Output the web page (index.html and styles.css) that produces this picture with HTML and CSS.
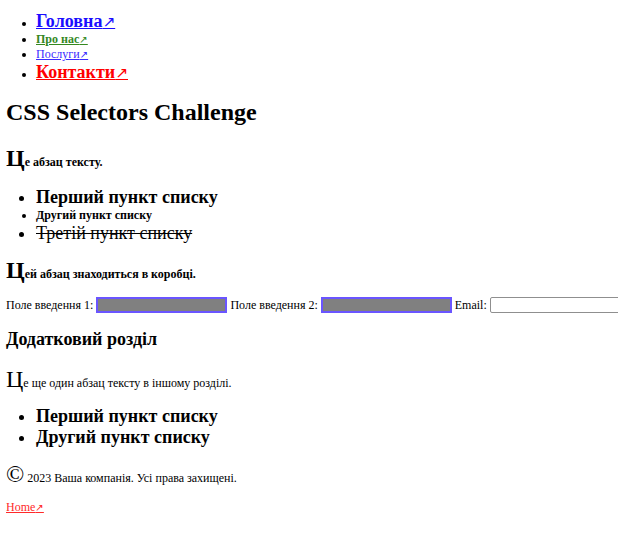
FILE: index.html
```html
<!DOCTYPE html>
<html lang="uk">
<head>
<meta charset="utf-8">
<title>CSS Selectors Challenge</title>
<link rel="stylesheet" href="styles.css">
</head>
<body>
<header>
  <nav>
    <ul class="nav">
      <li class="nav-item"><a class="nav-link home" href="#">Головна</a></li>
      <li class="nav-item"><a class="nav-link about" href="#">Про нас</a></li>
      <li class="nav-item"><a class="nav-link services" href="#">Послуги</a></li>
      <li class="nav-item"><a class="nav-link contacts" href="#">Контакти</a></li>
    </ul>
  </nav>
</header>
<main>
  <h1 class="title">CSS Selectors Challenge</h1>
  <p class="para bold">Це абзац тексту.</p>
  <ul class="list list-main">
    <li class="item-big">Перший пункт списку</li>
    <li class="item-small">Другий пункт списку</li>
    <li class="item-strike">Третій пункт списку</li>
  </ul>
  <div class="box">
    <p class="para bold">Цей абзац знаходиться в коробці.</p>
  </div>
  <form class="form">
    <label class="label">Поле введення 1:</label>
    <input class="field field-gray" type="text">
    <label class="label">Поле введення 2:</label>
    <input class="field field-gray" type="text">
    <label class="label">Email:</label>
    <input class="field field-email" type="email">
  </form>
  <section class="extra">
    <h2 class="subtitle">Додатковий розділ</h2>
    <p class="para">Це ще один абзац тексту в іншому розділі.</p>
    <ul class="list">
      <li class="item-big">Перший пункт списку</li>
      <li class="item-big">Другий пункт списку</li>
    </ul>
  </section>
</main>
<footer class="footer">
  <p class="para">© 2023 Ваша компанія. Усі права захищені.</p>
  <a class="home-link" href="#">Home</a>
</footer>
</body>
</html>
```
FILE: styles.css
```css
body {
  margin: 11px 6px 6px;
  font-family: "Liberation Serif", "Times New Roman", serif;
  font-size: 12px;
  color: #000;
  background: #fff;
}

.nav {
  margin: 0 0 12px;
  padding-left: 30px;
}

.nav-link::after,
.home-link::after {
  content: "\2197";
  font-family: "DejaVu Sans", sans-serif;
  font-weight: normal;
  font-size: 0.85em;
}

.home {
  font-size: 18px;
  font-weight: bold;
  color: #1a0dff;
}

.about {
  font-weight: bold;
  color: #34881f;
}

.services {
  color: #3a2bff;
}

.contacts {
  font-size: 18px;
  font-weight: bold;
  color: #ff0000;
}

.title {
  font-size: 24px;
  margin: 16px 0 19px;
}

.para {
  margin: 13px 0;
}

.para::first-letter {
  font-size: 2em;
}

.bold {
  font-weight: bold;
}

.list {
  margin: 13px 0;
  padding-left: 30px;
}

.list-main {
  margin: 15px 0 13px;
}

.item-big {
  font-size: 18px;
  font-weight: bold;
}

.item-small {
  font-weight: bold;
}

.item-strike {
  font-size: 18px;
  text-decoration: line-through;
}

.form {
  white-space: nowrap;
}

.field {
  width: 131px;
  height: 16px;
  box-sizing: border-box;
  margin: 0;
  padding: 1px 2px;
  font: inherit;
}

.field-gray {
  background: #808080;
  border: 2px solid #6a55ff;
}

.field-email {
  width: 133px;
  background: #fff;
  border: 1px solid #8f8f8f;
  border-radius: 2px;
}

.subtitle {
  font-size: 18px;
  margin: 16px 0;
}

.footer .para {
  margin-bottom: 12px;
}

.home-link {
  color: #ff2a2a;
}
```
